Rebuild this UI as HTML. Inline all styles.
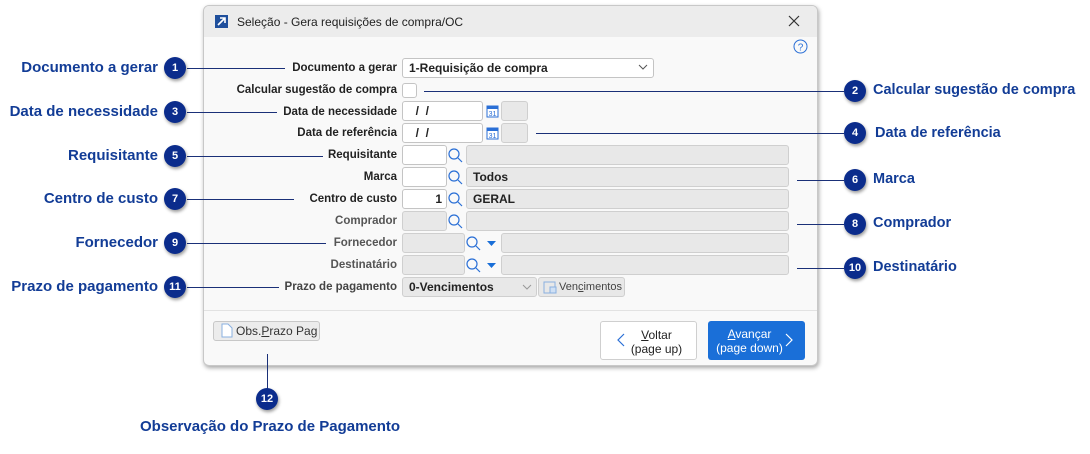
<!DOCTYPE html>
<html><head><meta charset="utf-8"><style>
*{box-sizing:border-box;margin:0;padding:0}
body{width:1090px;height:454px;background:#fff;position:relative;font-family:"Liberation Sans",sans-serif;overflow:hidden}
.a{position:absolute}
.dlg{left:203px;top:5px;width:615px;height:361px;background:#f9f9f9;border:1px solid #c8c8c8;border-radius:6px;box-shadow:1px 2px 4px rgba(0,0,0,.35);overflow:hidden}
.tb{left:0;top:0;width:100%;height:31px;background:#ececec;font-size:12px;color:#222}
.lbl{font-size:11.5px;font-weight:bold;color:#222;text-align:right;width:300px;left:97px}
.lbl.g{color:#555}
.in{background:#fff;border:1px solid #c4c4c4;border-radius:3px;height:20px;font-size:12px;font-weight:bold;color:#222;padding-left:6px;line-height:18px}
.gr{background:#e8e8e8;border:1px solid #cfcfcf}
.al{font-size:15px;font-weight:bold;color:#123c96;white-space:nowrap}
.ar{font-size:14.5px}
.b{width:22px;height:22px;border-radius:50%;background:#0b2c8c;color:#fff;font-size:11px;font-weight:bold;text-align:center;line-height:22px;box-shadow:1px 2px 3px rgba(0,0,0,.4)}
.ln{height:1px;background:#1a3078}
.vl{width:1px;background:#1a3078}
</style></head><body>
<div class="a dlg">
 <div class="a tb">
  <div class="a" style="left:11px;top:9px;width:13px;height:13px;background:#1f4f9c"></div>
  <svg class="a" style="left:11px;top:9px" width="13" height="13"><path d="M3 10L10 3M5 3H10V8" stroke="#fff" stroke-width="1.6" fill="none"/></svg>
  <div class="a" style="left:33px;top:9px">Seleção - Gera requisições de compra/OC</div>
  <svg class="a" style="left:584px;top:9px" width="12" height="12"><path d="M1 1L11 11M11 1L1 11" stroke="#333" stroke-width="1.2"/></svg>
 </div>
 <svg class="a" style="left:589px;top:33px" width="15" height="15"><circle cx="7.5" cy="7.5" r="6.5" fill="none" stroke="#2a6fd6"/><text x="7.5" y="11.5" font-size="10" text-anchor="middle" fill="#2a6fd6" font-family="Liberation Sans">?</text></svg>
 <div class="a" style="left:0;top:304px;width:100%;height:1px;background:#e2e2e2"></div>
</div>

<div class="a lbl" style="top:62px">Documento a gerar</div>
<div class="a lbl" style="top:84px">Calcular sugestão de compra</div>
<div class="a lbl" style="top:106px">Data de necessidade</div>
<div class="a lbl" style="top:127px">Data de referência</div>
<div class="a lbl" style="top:149px">Requisitante</div>
<div class="a lbl" style="top:171px">Marca</div>
<div class="a lbl" style="top:193px">Centro de custo</div>
<div class="a lbl g" style="top:215px">Comprador</div>
<div class="a lbl g" style="top:237px">Fornecedor</div>
<div class="a lbl g" style="top:259px">Destinatário</div>
<div class="a lbl g" style="top:281px;color:#444">Prazo de pagamento</div>

<div class="a in" style="left:402px;top:58px;width:252px">1-Requisição de compra</div>
<svg class="a" style="left:638px;top:64px" width="10" height="7"><path d="M1 1L5 5L9 1" stroke="#555" fill="none"/></svg>
<div class="a in" style="left:402px;top:83px;width:15px;height:15px;padding:0"></div>
<div class="a in" style="left:402px;top:101px;width:81px">&nbsp;&nbsp;/&nbsp;&nbsp;/</div>
<div class="a in" style="left:402px;top:123px;width:81px">&nbsp;&nbsp;/&nbsp;&nbsp;/</div>
<svg class="a" style="left:486px;top:103px" width="13" height="15"><rect x="1" y="3" width="11" height="11" fill="#fff" stroke="#2a6fd6"/><rect x="1" y="3" width="11" height="3" fill="#2a6fd6"/><text x="6.5" y="13" font-size="7" text-anchor="middle" fill="#2a6fd6" font-family="Liberation Sans">31</text></svg>
<svg class="a" style="left:486px;top:125px" width="13" height="15"><rect x="1" y="3" width="11" height="11" fill="#fff" stroke="#2a6fd6"/><rect x="1" y="3" width="11" height="3" fill="#2a6fd6"/><text x="6.5" y="13" font-size="7" text-anchor="middle" fill="#2a6fd6" font-family="Liberation Sans">31</text></svg>
<div class="a in gr" style="left:501px;top:101px;width:27px"></div>
<div class="a in gr" style="left:501px;top:123px;width:27px"></div>

<div class="a in" style="left:402px;top:145px;width:45px"></div>
<div class="a in" style="left:402px;top:167px;width:45px"></div>
<div class="a in" style="left:402px;top:189px;width:45px;text-align:right;padding-right:4px">1</div>
<div class="a in gr" style="left:402px;top:211px;width:45px"></div>
<div class="a in gr" style="left:466px;top:145px;width:323px"></div>
<div class="a in gr" style="left:466px;top:167px;width:323px">Todos</div>
<div class="a in gr" style="left:466px;top:189px;width:323px">GERAL</div>
<div class="a in gr" style="left:466px;top:211px;width:323px"></div>
<div class="a in gr" style="left:402px;top:233px;width:63px"></div>
<div class="a in gr" style="left:402px;top:255px;width:63px"></div>
<div class="a in gr" style="left:501px;top:233px;width:288px"></div>
<div class="a in gr" style="left:501px;top:255px;width:288px"></div>
<svg class="a" style="left:0;top:0" width="1090" height="454">
 <g stroke="#2a6fd6" stroke-width="1.2" fill="none">
  <circle cx="454" cy="154" r="5"/><path d="M458 158L462 162"/>
  <circle cx="454" cy="176" r="5"/><path d="M458 180L462 184"/>
  <circle cx="454" cy="198" r="5"/><path d="M458 202L462 206"/>
  <circle cx="454" cy="220" r="5"/><path d="M458 224L462 228"/>
  <circle cx="472" cy="242" r="5"/><path d="M476 246L480 250"/>
  <circle cx="472" cy="264" r="5"/><path d="M476 268L480 272"/>
 </g>
 <path d="M487 241H496L491.5 246Z M487 263H496L491.5 268Z" fill="#1a6fd8"/>
</svg>
<div class="a in gr" style="left:402px;top:277px;width:135px">0-Vencimentos</div>
<svg class="a" style="left:522px;top:284px" width="10" height="7"><path d="M1 1L5 5L9 1" stroke="#999" fill="none"/></svg>
<div class="a gr" style="left:538px;top:277px;width:87px;height:20px;border-radius:3px;font-size:11px;color:#444;line-height:18px;padding-left:20px;white-space:nowrap;overflow:hidden">Ven<u>c</u>imentos</div>
<svg class="a" style="left:543px;top:280px" width="14" height="14"><rect x="1" y="2" width="11" height="11" fill="none" stroke="#8ab0e0"/><rect x="7" y="7" width="6" height="6" fill="#cfe0f5" stroke="#8ab0e0"/></svg>

<div class="a" style="left:213px;top:321px;width:107px;height:20px;background:#ececec;border:1px solid #c8c8c8;border-radius:3px;font-size:12px;color:#333;line-height:18px;padding-left:22px">Obs.<u>P</u>razo Pag</div>
<svg class="a" style="left:221px;top:323px" width="12" height="15"><path d="M1 1H7L11 5V14H1Z" fill="#fff" stroke="#8ab0e0"/></svg>
<div class="a" style="left:600px;top:321px;width:97px;height:39px;background:#fff;border:1px solid #cfcfcf;border-radius:3px;font-size:12px;color:#222;text-align:center;line-height:14px;padding:6px 0 0 16px"><u>V</u>oltar<br>(page up)</div>
<svg class="a" style="left:617px;top:333px" width="8" height="14"><path d="M7 1L1 7L7 13" stroke="#2a6fd6" fill="none" stroke-width="1.2"/></svg>
<div class="a" style="left:708px;top:321px;width:97px;height:39px;background:#1a6fd8;border-radius:3px;font-size:12px;color:#fff;text-align:center;line-height:14px;padding:6px 14px 0 0"><u>A</u>vançar<br>(page down)</div>
<svg class="a" style="left:785px;top:333px" width="8" height="14"><path d="M1 1L7 7L1 13" stroke="#fff" fill="none" stroke-width="1.2"/></svg>

<div class="a ln" style="left:187px;top:68px;width:98px"></div>
<div class="a ln" style="left:187px;top:112px;width:90px"></div>
<div class="a ln" style="left:187px;top:156px;width:136px"></div>
<div class="a ln" style="left:187px;top:199px;width:107px"></div>
<div class="a ln" style="left:187px;top:243px;width:139px"></div>
<div class="a ln" style="left:187px;top:287px;width:92px"></div>
<div class="a ln" style="left:424px;top:91px;width:420px"></div>
<div class="a ln" style="left:536px;top:133px;width:308px"></div>
<div class="a ln" style="left:797px;top:180px;width:47px"></div>
<div class="a ln" style="left:797px;top:224px;width:47px"></div>
<div class="a ln" style="left:797px;top:268px;width:47px"></div>
<div class="a vl" style="left:267px;top:354px;height:36px"></div>

<div class="a b" style="left:164px;top:57px">1</div>
<div class="a b" style="left:164px;top:101px">3</div>
<div class="a b" style="left:164px;top:145px">5</div>
<div class="a b" style="left:164px;top:188px">7</div>
<div class="a b" style="left:164px;top:232px">9</div>
<div class="a b" style="left:164px;top:276px">11</div>
<div class="a b" style="left:844px;top:80px">2</div>
<div class="a b" style="left:844px;top:122px">4</div>
<div class="a b" style="left:844px;top:169px">6</div>
<div class="a b" style="left:844px;top:213px">8</div>
<div class="a b" style="left:844px;top:257px">10</div>
<div class="a b" style="left:256px;top:388px">12</div>

<div class="a al" style="right:932px;top:59px">Documento a gerar</div>
<div class="a al" style="right:932px;top:103px">Data de necessidade</div>
<div class="a al" style="right:932px;top:147px">Requisitante</div>
<div class="a al" style="right:932px;top:190px">Centro de custo</div>
<div class="a al" style="right:932px;top:234px">Fornecedor</div>
<div class="a al" style="right:932px;top:278px">Prazo de pagamento</div>
<div class="a al ar" style="left:873px;top:82px">Calcular sugestão de compra</div>
<div class="a al ar" style="left:875px;top:125px">Data de referência</div>
<div class="a al ar" style="left:873px;top:171px">Marca</div>
<div class="a al ar" style="left:873px;top:215px">Comprador</div>
<div class="a al ar" style="left:873px;top:259px">Destinatário</div>
<div class="a al" style="left:140px;top:418px">Observação do Prazo de Pagamento</div>
</body></html>
